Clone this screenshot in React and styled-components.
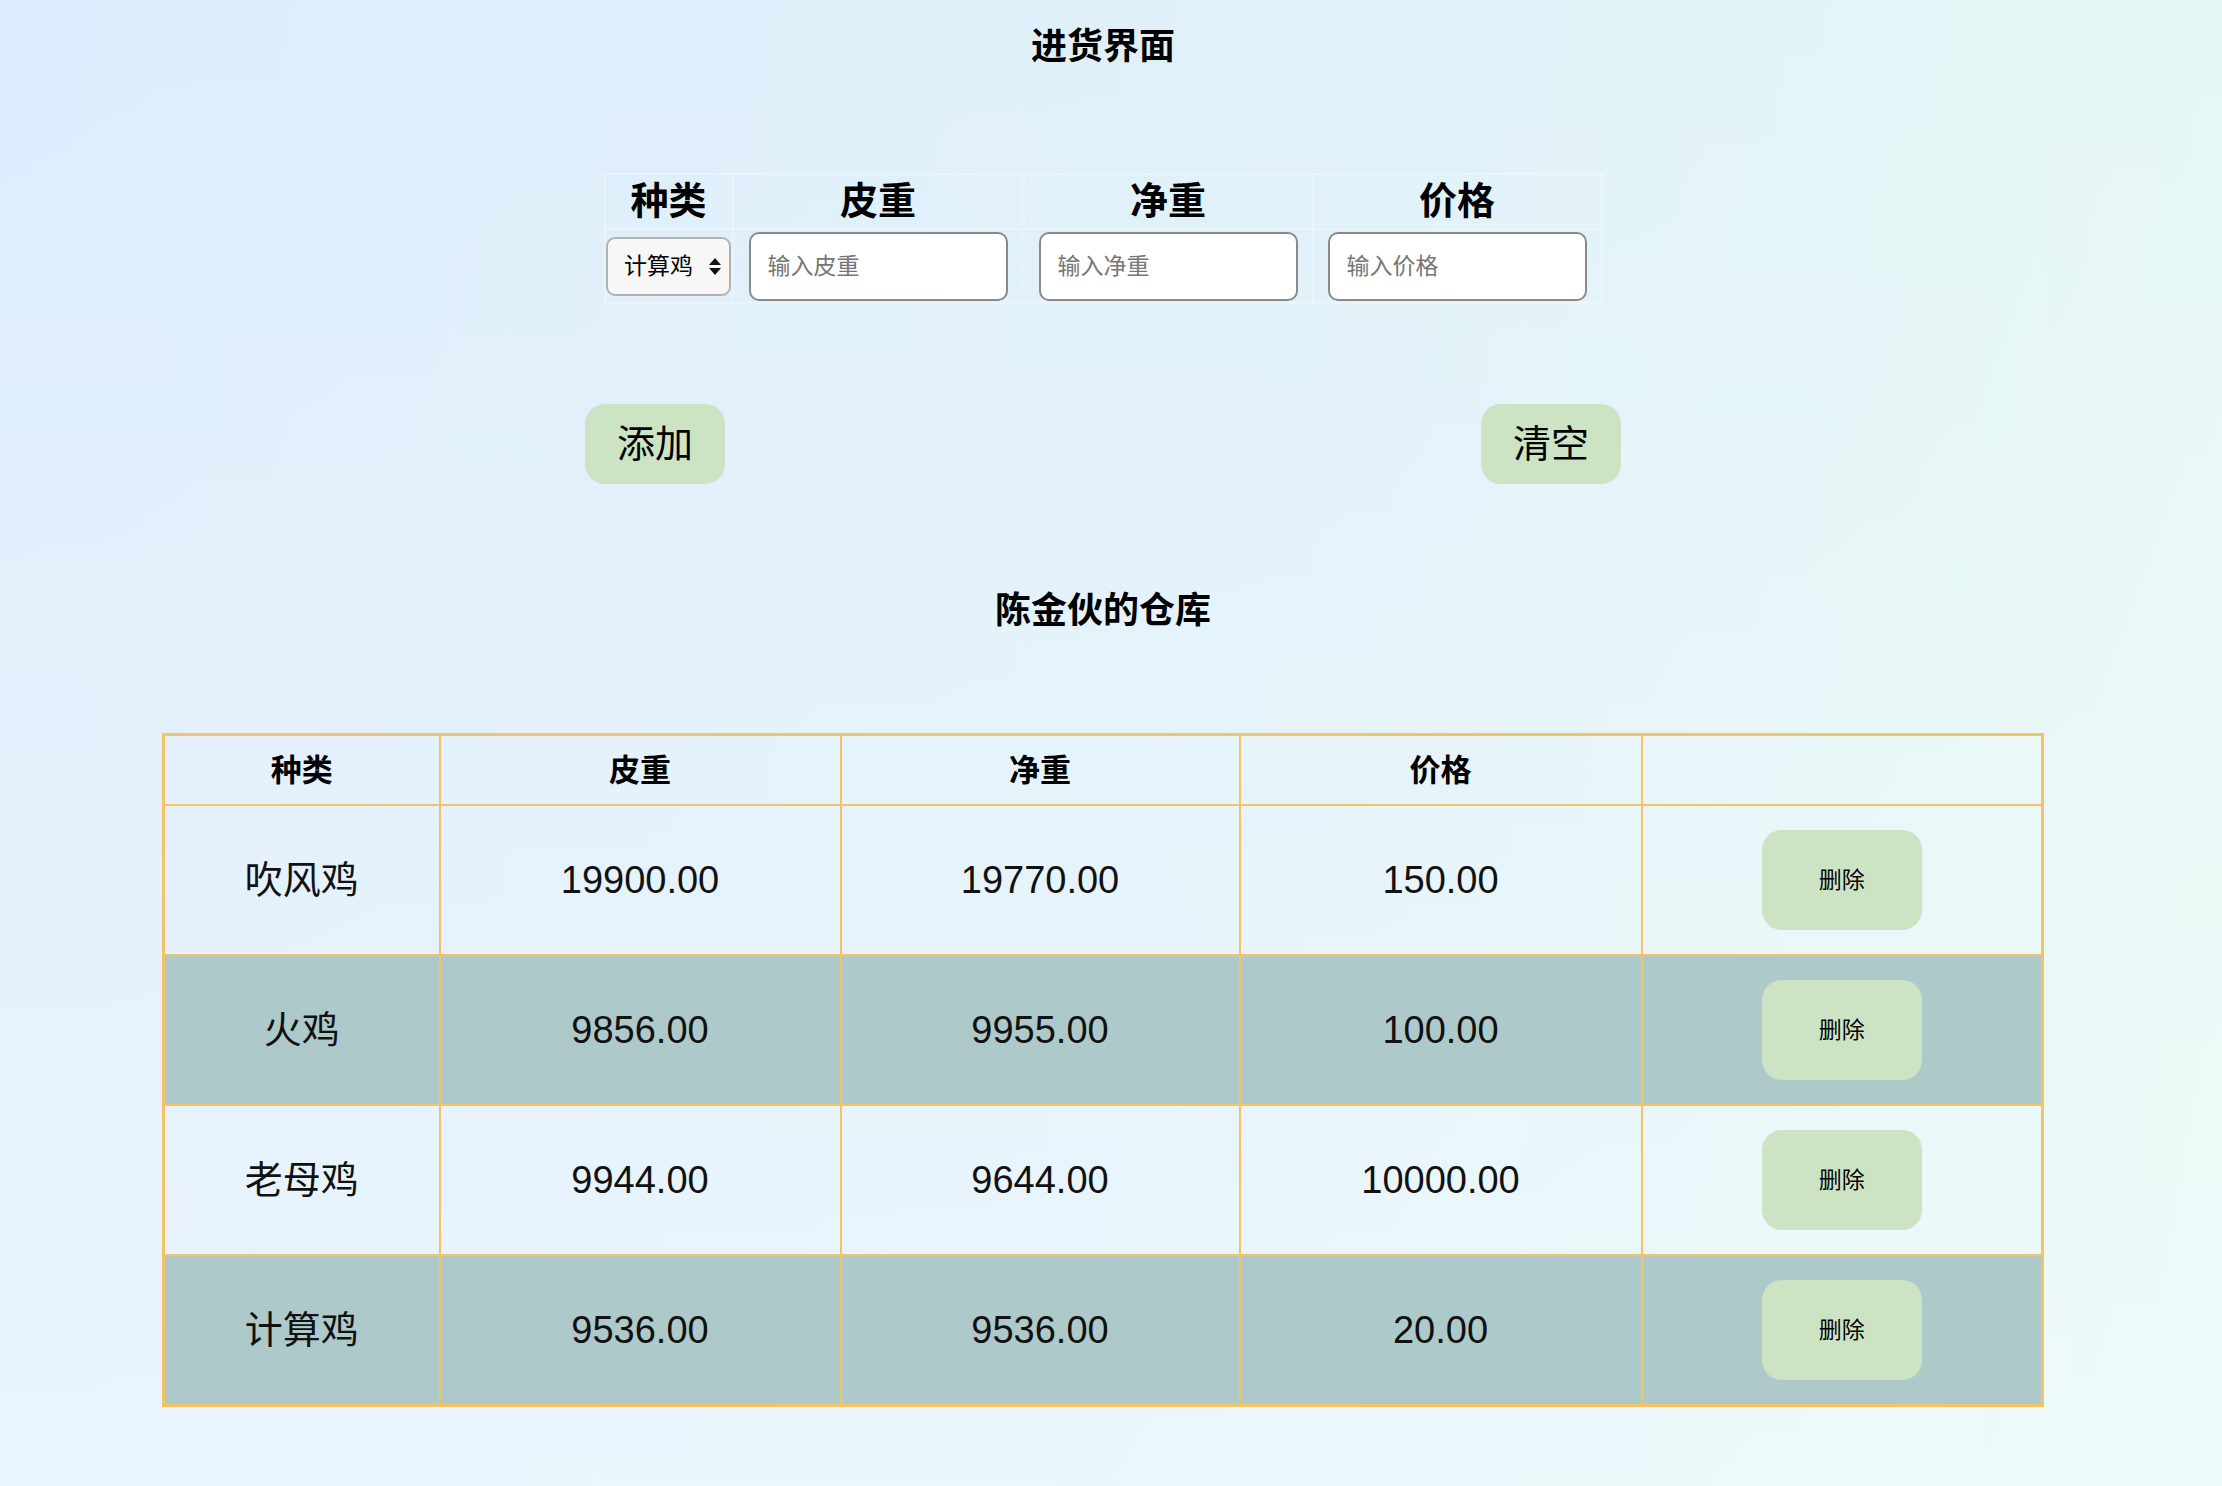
import React, { useState } from "react";
import styled, { createGlobalStyle } from "styled-components";

const GlobalStyle = createGlobalStyle`
  html, body {
    margin: 0;
    padding: 0;
  }
  body {
    font-family: "Liberation Sans", "Noto Sans CJK SC", sans-serif;
    color: #000;
  }
`;

const Page = styled.div`
  min-height: 1486px;
  box-sizing: border-box;
  padding-top: 22px;
  background:
    linear-gradient(to bottom, rgba(255, 255, 255, 0) 0%, rgba(246, 251, 255, 0.5) 100%),
    linear-gradient(100deg, #dcecfc 0%, #e0f1f9 55%, #e6f9f3 100%);
`;

const Inner = styled.div`
  width: 2206px;
  display: flex;
  flex-direction: column;
  align-items: center;
`;

const Heading = styled.h2`
  margin: ${(p) => p.$top || 0}px 0 0;
  font-size: 36px;
  line-height: 50px;
  font-weight: 700;
`;

const Col = styled.col`
  width: ${(p) => p.$w}px;
`;

const FormTable = styled.table`
  margin-top: 101px;
  width: 997px;
  table-layout: fixed;
  border-collapse: collapse;

  th, td {
    border: 2px solid rgba(255, 255, 255, 0.25);
    padding: 0;
    text-align: center;
    vertical-align: middle;
  }
  th {
    height: 53px;
    font-size: 38px;
    line-height: 53px;
    font-weight: 700;
  }
  td {
    height: 72px;
  }
`;

const SelectBox = styled.div`
  width: 125px;
  height: 59px;
  box-sizing: border-box;
  margin: 0 auto;
  display: flex;
  align-items: center;
  padding: 0 8px 0 16px;
  border: 2px solid #b3b3b3;
  border-radius: 9px;
  background: #f7f7f7;

  select {
    flex: 1;
    min-width: 0;
    appearance: none;
    border: none;
    outline: none;
    background: transparent;
    font-family: inherit;
    font-size: 23px;
    color: #000;
    padding: 0;
  }
`;

const TextInput = styled.input`
  width: 259px;
  height: 69px;
  box-sizing: border-box;
  border: 2px solid #8a8a8a;
  border-radius: 10px;
  padding: 0 17px;
  font-family: inherit;
  font-size: 23px;
  background: #fff;
  outline: none;

  &::placeholder {
    color: #767676;
  }
`;

const ButtonRow = styled.div`
  margin-top: 100px;
  width: 1036px;
  display: flex;
  justify-content: space-between;
`;

const GreenButton = styled.button`
  height: ${(p) => (p.$small ? 100 : 80)}px;
  width: ${(p) => (p.$small ? "160px" : "auto")};
  padding: 0 ${(p) => (p.$small ? 0 : 32)}px;
  border: none;
  border-radius: 20px;
  background: #cce3c4;
  font-family: inherit;
  font-size: ${(p) => (p.$small ? 23 : 38)}px;
  line-height: 1;
  color: #000;
  cursor: pointer;
`;

const StockTable = styled.table`
  margin-top: 97px;
  width: 1879px;
  table-layout: fixed;
  border-collapse: collapse;
  border: 3px solid #f5c462;

  th, td {
    border: 2px solid #f5c462;
    padding: 0;
    text-align: center;
    vertical-align: middle;
    line-height: 1;
  }
  th {
    height: 68px;
    font-size: 31px;
    font-weight: 700;
  }
  td {
    height: 148px;
    font-size: 38px;
    color: #111;
  }
`;

const StockRow = styled.tr`
  background: ${(p) => (p.$striped ? "#aec9ca" : "transparent")};
`;

const Arrows = () => (
  <svg width="12" height="17" viewBox="0 0 12 17">
    <path d="M6 0 L12 7 L0 7 Z" fill="#111" />
    <path d="M0 10 L12 10 L6 17 Z" fill="#111" />
  </svg>
);

const initialRows = [
  { kind: "吹风鸡", tare: "19900.00", net: "19770.00", price: "150.00" },
  { kind: "火鸡", tare: "9856.00", net: "9955.00", price: "100.00" },
  { kind: "老母鸡", tare: "9944.00", net: "9644.00", price: "10000.00" },
  { kind: "计算鸡", tare: "9536.00", net: "9536.00", price: "20.00" },
];

export default function App() {
  const [rows] = useState(initialRows);

  return (
    <Page>
      <GlobalStyle />
      <Inner>
        <Heading>进货界面</Heading>

        <FormTable>
          <colgroup>
            <Col $w={128} />
            <Col $w={291} />
            <Col $w={289} />
            <Col $w={289} />
          </colgroup>
          <thead>
            <tr>
              <th>种类</th>
              <th>皮重</th>
              <th>净重</th>
              <th>价格</th>
            </tr>
          </thead>
          <tbody>
            <tr>
              <td>
                <SelectBox>
                  <select defaultValue="计算鸡">
                    <option>吹风鸡</option>
                    <option>火鸡</option>
                    <option>老母鸡</option>
                    <option>计算鸡</option>
                  </select>
                  <Arrows />
                </SelectBox>
              </td>
              <td>
                <TextInput placeholder="输入皮重" />
              </td>
              <td>
                <TextInput placeholder="输入净重" />
              </td>
              <td>
                <TextInput placeholder="输入价格" />
              </td>
            </tr>
          </tbody>
        </FormTable>

        <ButtonRow>
          <GreenButton>添加</GreenButton>
          <GreenButton>清空</GreenButton>
        </ButtonRow>

        <Heading $top={102}>陈金伙的仓库</Heading>

        <StockTable>
          <colgroup>
            <Col $w={276} />
            <Col $w={401} />
            <Col $w={399} />
            <Col $w={402} />
            <Col $w={401} />
          </colgroup>
          <thead>
            <tr>
              <th>种类</th>
              <th>皮重</th>
              <th>净重</th>
              <th>价格</th>
              <th></th>
            </tr>
          </thead>
          <tbody>
            {rows.map((r, i) => (
              <StockRow key={r.kind} $striped={i % 2 === 1}>
                <td>{r.kind}</td>
                <td>{r.tare}</td>
                <td>{r.net}</td>
                <td>{r.price}</td>
                <td>
                  <GreenButton $small>删除</GreenButton>
                </td>
              </StockRow>
            ))}
          </tbody>
        </StockTable>
      </Inner>
    </Page>
  );
}
